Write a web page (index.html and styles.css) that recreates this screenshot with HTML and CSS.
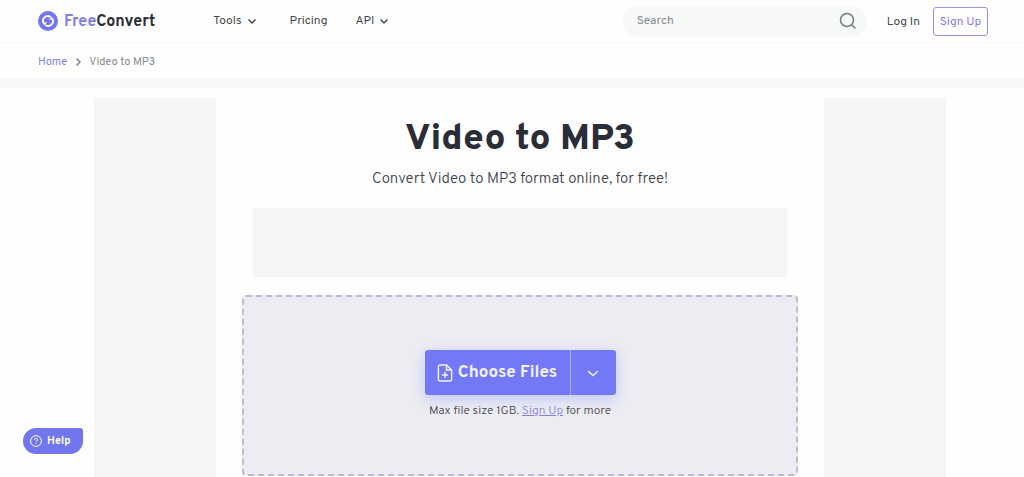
FILE: index.html
```html
<!DOCTYPE html>
<html lang="en">
<head>
    <meta charset="UTF-8">
    <meta name="viewport" content="width=device-width, initial-scale=1.0">
    <title>Video to MP3 - FreeConvert</title>
    <link rel="stylesheet" href="styles.css">
</head>
<body>
    <header class="header">
        <a href="#" class="logo">
            <svg class="logo-icon" viewBox="0 0 20 20" aria-hidden="true">
                <circle cx="10" cy="10" r="10" fill="#7276ee"/>
                <path d="M5.8 12.4A4.700 4.700 0 0 1 12.600 6.100" fill="none" stroke="#fff" stroke-width="1.900"/>
                <path d="M14.200 7.600A4.700 4.700 0 0 1 7.400 13.900" fill="none" stroke="#fff" stroke-width="1.900"/>
                <path d="M14.200 5.200v3.400h-3.400zM5.800 14.800v-3.400h3.400z" fill="#fff"/>
            </svg>
            <span class="logo-text"><span class="logo-free">Free</span>Convert</span>
        </a>

        <nav class="nav">
            <a href="#" class="nav-link has-menu">Tools
                <svg class="chevron" viewBox="0 0 10 10" aria-hidden="true"><path d="M1.5 3.5L5 7l3.5-3.5"/></svg>
            </a>
            <a href="#" class="nav-link">Pricing</a>
            <a href="#" class="nav-link has-menu">API
                <svg class="chevron" viewBox="0 0 10 10" aria-hidden="true"><path d="M1.5 3.5L5 7l3.5-3.5"/></svg>
            </a>
        </nav>

        <form class="search">
            <input type="text" class="search-input" placeholder="Search" aria-label="Search">
            <button type="submit" class="search-button" aria-label="Search">
                <svg viewBox="0 0 18 18" aria-hidden="true"><circle cx="8" cy="8" r="6.5"/><path d="M12.7 12.7L16.5 16.5"/></svg>
            </button>
        </form>

        <a href="#" class="login-link">Log In</a>
        <a href="#" class="signup-link">Sign Up</a>
    </header>

    <nav class="breadcrumb" aria-label="Breadcrumb">
        <a href="#">Home</a>
        <svg class="chevron" viewBox="0 0 10 10" aria-hidden="true"><path d="M3.5 1.5L7 5L3.5 8.5"/></svg>
        <span>Video to MP3</span>
    </nav>

    <div class="page">
        <aside class="side-ad"></aside>

        <main class="content">
            <h1>Video to MP3</h1>
            <p class="subtitle">Convert Video to MP3 format online, for free!</p>
            <div class="banner-ad"></div>

            <section class="dropzone">
                <div class="choose">
                    <button type="button" class="choose-button">
                        <svg class="file-icon" viewBox="0 0 16 18" aria-hidden="true">
                            <path d="M9.5 1H3a1.6 1.6 0 0 0-1.6 1.6v12.8A1.6 1.6 0 0 0 3 17h10a1.6 1.6 0 0 0 1.6-1.6V6z"/>
                            <path d="M9.5 1v5h5.1M8 8v6M5 11h6"/>
                        </svg>
                        Choose Files
                    </button>
                    <button type="button" class="choose-more" aria-label="More sources">
                        <svg viewBox="0 0 12 12" aria-hidden="true"><path d="M1 4l5 4.5L11 4"/></svg>
                    </button>
                </div>
                <p class="limit">Max file size 1GB. <a href="#">Sign Up</a> for more</p>
            </section>
        </main>

        <aside class="side-ad"></aside>
    </div>

    <button type="button" class="help-button">
        <svg viewBox="0 0 12 12" aria-hidden="true">
            <circle cx="6" cy="6" r="5.4"/>
            <path d="M4.5 4.8a1.5 1.5 0 1 1 2.3 1.2C6.2 6.4 6 6.6 6 7.2M6 8.4v.8"/>
        </svg>
        Help
    </button>
</body>
</html>
```
FILE: styles.css
```css
* {
    box-sizing: border-box;
}
body {
    margin: 0;
    min-height: 100vh;
    display: flex;
    flex-direction: column;
    background-color: #fefefe;
    color: #3c4047;
    font-family: Overpass, Roboto, sans-serif;
    font-size: 12px;
}
a {
    color: #7f7fe6;
    text-decoration: none;
}
button {
    border: none;
    padding: 0;
    font-family: inherit;
    cursor: pointer;
}
svg {
    flex: none;
    fill: none;
    stroke: currentColor;
}
.header {
    display: flex;
    align-items: center;
    height: 43px;
    padding: 0 36px 0 38px;
    border-bottom: 1px solid #f7f7f8;
}
.logo {
    display: flex;
    align-items: center;
    gap: 6px;
    color: #2b2d33;
    font-size: 16px;
    font-weight: bold;
}
.logo-icon {
    width: 20px;
    height: 20px;
    stroke: none;
}
.logo-text {
    padding-top: 2px;
}
.logo-free {
    color: #7f7fe6;
}
.nav {
    display: flex;
    gap: 28px;
    margin-left: 58px;
}
.nav-link {
    display: flex;
    align-items: center;
    gap: 5px;
    color: #44474d;
    font-size: 12px;
}
.has-menu {
    padding-right: 5px;
}
.chevron {
    width: 10px;
    height: 10px;
    stroke-width: 1.5;
}
.search {
    display: flex;
    align-items: center;
    width: 244px;
    height: 31px;
    margin-left: auto;
    padding: 0 10px 0 14px;
    border-radius: 16px;
    background-color: #f7f8f8;
}
.search-input {
    flex: 1;
    min-width: 0;
    padding: 0;
    border: none;
    outline: none;
    background: none;
    font-family: inherit;
    font-size: 12px;
}
.search-input::placeholder {
    color: #858891;
}
.search-button {
    display: flex;
    background: none;
    color: #777b88;
}
.search-button svg {
    width: 18px;
    height: 18px;
    stroke-width: 1.5;
}
.login-link {
    margin: 0 13px 0 20px;
    padding-top: 2px;
    color: #44474d;
}
.signup-link {
    display: flex;
    align-items: center;
    justify-content: center;
    width: 55px;
    height: 29px;
    padding-top: 2px;
    border: 1px solid #9292e6;
    border-radius: 3px;
}
.breadcrumb {
    display: flex;
    align-items: center;
    gap: 6px;
    height: 36px;
    padding: 2px 38px 0;
    color: #85898f;
    font-size: 11px;
    box-shadow: 0 9px 0 #f8f8f8;
}
.page {
    flex: 1;
    display: grid;
    grid-template-columns: 122px 1fr 122px;
    gap: 26px;
    margin-top: 19px;
    padding: 0 78px 0 94px;
}
.side-ad,
.banner-ad {
    background-color: #f5f5f5;
}
.content {
    display: flex;
    flex-direction: column;
    text-align: center;
}
h1 {
    margin: 22px 0 0;
    color: #2a2d38;
    font-size: 37px;
    font-weight: 800;
    line-height: 40px;
}
.subtitle {
    margin: 10px 0 18px;
    font-size: 15px;
    font-weight: 300;
    line-height: 20px;
}
.banner-ad {
    height: 69px;
    margin: 0 11px 18px;
}
.dropzone {
    display: flex;
    flex-direction: column;
    align-items: center;
    min-height: 181px;
    margin-bottom: 1px;
    padding-top: 53px;
    border: 2px dashed #bdb9d6;
    border-radius: 4px;
    background-color: #edecf2;
}
.choose {
    display: flex;
    height: 45px;
    border-radius: 3px;
    box-shadow: 0 4px 14px #b9c8f6;
}
.choose-button,
.choose-more {
    display: flex;
    align-items: center;
    justify-content: center;
    background-color: #7379f6;
    color: #f3f3ff;
}
.choose-button {
    gap: 5px;
    width: 145px;
    border-radius: 3px 0 0 3px;
    font-size: 17px;
    font-weight: bold;
}
.file-icon {
    width: 16px;
    height: 18px;
    stroke-width: 1.4;
}
.choose-more {
    width: 46px;
    border-left: 1px solid #a9adfa;
    border-radius: 0 3px 3px 0;
}
.choose-more svg {
    width: 12px;
    height: 12px;
    stroke-width: 1.5;
}
.limit {
    margin: 8px 0 0;
    font-size: 12px;
    font-weight: 300;
    line-height: 16px;
}
.limit a {
    text-decoration: underline;
}
.help-button {
    position: fixed;
    bottom: 23px;
    left: 23px;
    display: flex;
    align-items: center;
    gap: 5px;
    height: 26px;
    padding: 0 12px 0 7px;
    border-radius: 13px 3px 13px 13px;
    background-color: #7276ee;
    color: #fff;
    font-size: 11px;
    font-weight: bold;
}
.help-button svg {
    width: 12px;
    height: 12px;
}
```
